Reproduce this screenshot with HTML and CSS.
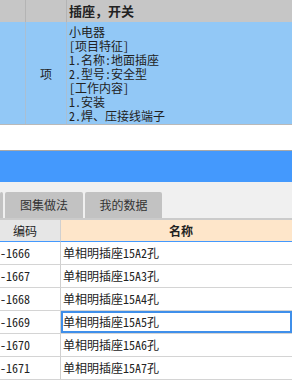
FILE: index.html
```html
<!DOCTYPE html>
<html lang="zh-CN">
<head>
  <meta charset="UTF-8">
  <title>清单定额</title>
  <link rel="stylesheet" href="styles.css">
</head>
<body>

  <div class="bill">
    <div class="bill-row head">
      <div class="cell"></div>
      <div class="cell"></div>
      <div class="cell name">插座，开关</div>
    </div>
    <div class="bill-row item">
      <div class="cell"></div>
      <div class="cell unit">项</div>
      <div class="cell desc">小电器<br>[项目特征]<br>1.名称:地面插座<br>2.型号:安全型<br>[工作内容]<br>1.安装<br>2.焊、压接线端子</div>
    </div>
  </div>

  <div class="bar"></div>

  <div class="tabs">
    <span class="tab edge"></span>
    <span class="tab">图集做法</span>
    <span class="tab second">我的数据</span>
  </div>

  <div class="grid">
    <div class="grid-row header">
      <div class="code">编码</div>
      <div class="title">名称</div>
    </div>
    <div class="grid-row">
      <div class="code">-1666</div>
      <div class="title">单相明插座15A2孔</div>
    </div>
    <div class="grid-row">
      <div class="code">-1667</div>
      <div class="title">单相明插座15A3孔</div>
    </div>
    <div class="grid-row">
      <div class="code">-1668</div>
      <div class="title">单相明插座15A4孔</div>
    </div>
    <div class="grid-row">
      <div class="code">-1669</div>
      <div class="title selected">单相明插座15A5孔</div>
    </div>
    <div class="grid-row">
      <div class="code">-1670</div>
      <div class="title">单相明插座15A6孔</div>
    </div>
    <div class="grid-row">
      <div class="code">-1671</div>
      <div class="title">单相明插座15A7孔</div>
    </div>
  </div>

</body>
</html>
```

FILE: styles.css
```css
body {
  margin: 0;
  width: 292px;
  height: 381px;
  overflow: hidden;
  background: #fff;
  color: #222;
  font-family: "Noto Sans Mono CJK SC", "Noto Sans CJK SC", monospace;
  font-size: 12px;
}

/* top bill table */
.bill {
  border-bottom: 1px solid #b9b9b9;
}
.bill-row {
  display: grid;
  grid-template-columns: 26px 41px 1fr;
}
.bill-row .cell {
  border-right: 1px solid #b4b4b4;
}
.bill-row .cell:last-child {
  border-right: none;
}
.head {
  height: 22px;
  background: #c6c6c6;
}
.head .name {
  padding-left: 2px;
  font-weight: bold;
  font-size: 13px;
  line-height: 21px;
}
.item {
  height: 102px;
  background: #92c8f6;
}
.item .cell {
  border-right-color: #a9bfd3;
}
.unit {
  display: flex;
  align-items: center;
  justify-content: center;
}
.desc {
  padding: 3px 0 0 2px;
  line-height: 14px;
  white-space: nowrap;
}

/* blue title bar */
.bar {
  margin-top: 25px;
  height: 31px;
  border-top: 1px solid #a8a8a8;
  background: #4499fd;
}

/* tabs */
.tabs {
  display: flex;
  align-items: flex-end;
  gap: 2px;
  height: 36px;
  background: #f0f0f0;
  border-bottom: 2px solid #cbcbcb;
}
.tab {
  width: 78px;
  height: 26px;
  line-height: 26px;
  text-align: center;
  background: #c2c2c2;
  border-radius: 2px 2px 0 0;
  color: #333;
  font-family: "Noto Sans CJK SC", sans-serif;
}
.tab.edge {
  width: 3px;
}
.tab.second {
  width: 77px;
}

/* data grid */
.grid-row {
  display: grid;
  grid-template-columns: 61px 1fr;
  height: 23px;
  line-height: 22px;
}
.grid-row .code {
  border-right: 1px solid #d0d0d0;
  border-bottom: 1px solid #d4d4d4;
  white-space: nowrap;
  overflow: hidden;
}
.grid-row .title {
  padding-left: 2px;
  border-bottom: 1px solid #d4d4d4;
  white-space: nowrap;
}
.header {
  height: 22px;
  line-height: 21px;
}
.header .code {
  padding-left: 13px;
  background: #e6e6e6;
  border-bottom: 1px solid #4499fd;
}
.header .title {
  padding-left: 108px;
  background: #fee6ca;
  font-weight: bold;
  border-bottom: 1px solid #4499fd;
}
.title.selected {
  box-shadow: inset 0 0 0 2px #3f8fea;
}
```
